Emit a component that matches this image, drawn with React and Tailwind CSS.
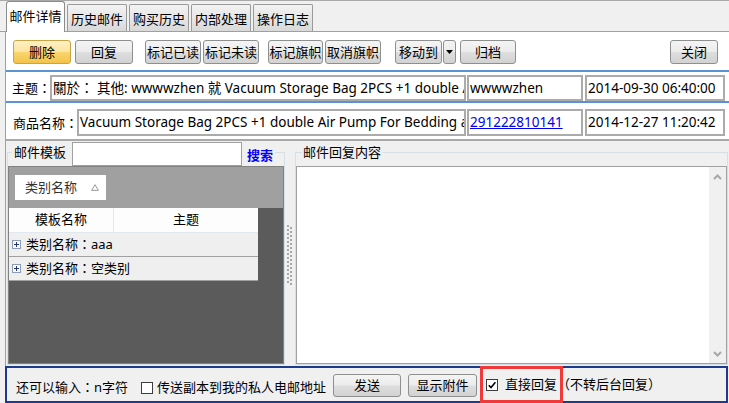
import React from "react";

const BTN =
  "flex items-center justify-center rounded-[3px] border border-[#8e8f8f] bg-[linear-gradient(#f4f4f4_0%,#ececec_48%,#dedede_52%,#d2d2d2_100%)] text-[13px] leading-none text-black whitespace-nowrap";
const BTN_Y =
  "flex items-center justify-center rounded-[3px] border border-[#c9a447] bg-[linear-gradient(#fdf0c4_0%,#fbe5a0_48%,#f8d571_52%,#f3c346_100%)] text-[13px] leading-none text-black whitespace-nowrap";

function C() {
  return <span className="font-['Noto_Sans_CJK_TC',sans-serif]">：</span>;
}

function ActiveTab({ label }) {
  return (
    <div className="w-[59px] h-[31px] -mb-px flex items-center justify-center border border-b-0 border-[#8c8c8c] rounded-t-[3px] bg-white">
      {label}
    </div>
  );
}

function Tab({ label }) {
  return (
    <div className="w-[60px] h-[27px] ml-[2px] flex items-center justify-center pt-[3px] border border-b-0 border-[#9a9a9a] rounded-t-[2px] bg-[linear-gradient(#f3f3f3,#d9d9d9)]">
      {label}
    </div>
  );
}

function Field({ cls, children }) {
  return (
    <div
      className={`${cls} border-2 border-[#ababab] bg-white flex items-center pl-[1px] overflow-hidden whitespace-nowrap text-[13.5px]`}
    >
      {children}
    </div>
  );
}

function PlusBox() {
  return (
    <svg width="9" height="9" viewBox="0 0 9 9" className="shrink-0">
      <rect x="0.5" y="0.5" width="8" height="8" fill="#f8f9fb" stroke="#8d9db3" />
      <path d="M2 4.5H7M4.5 2V7" stroke="#24366a" strokeWidth="1" />
    </svg>
  );
}

function Check({ checked, cls }) {
  return (
    <svg width="12" height="12" viewBox="0 0 12 12" className={`shrink-0 ${cls || ""}`}>
      <rect x="0.5" y="0.5" width="11" height="11" fill="#ffffff" stroke="#3c3c3c" />
      {checked && (
        <path d="M2.8 6.2L5 8.5L9.4 3.2" fill="none" stroke="#000" strokeWidth="1.6" />
      )}
    </svg>
  );
}

function Dots() {
  const items = [];
  for (let i = 0; i < 15; i++) {
    items.push(<rect key={`a${i}`} x="0" y={i * 4} width="2" height="2" fill="#a8a8a8" />);
    items.push(<rect key={`b${i}`} x="3" y={i * 4 + 2} width="2" height="2" fill="#a8a8a8" />);
  }
  return (
    <svg width="6" height="60" viewBox="0 0 6 60">
      {items}
    </svg>
  );
}

export default function App() {
  return (
    <div className="w-[729px] h-[403px] overflow-hidden relative flex flex-col border-t border-[#a9a9a9] bg-[#f0f0f0] text-[13px] text-black font-['Noto_Sans','Noto_Sans_CJK_SC',sans-serif]">
      {/* Tabs */}
      <div className="h-[31px] shrink-0 flex items-end pl-[6px] border-b border-[#a0a0a0]">
        <ActiveTab label="邮件详情" />
        <Tab label="历史邮件" />
        <Tab label="购买历史" />
        <Tab label="内部处理" />
        <Tab label="操作日志" />
      </div>

      {/* Panel */}
      <div className="ml-[5px] border-l border-[#a0a0a0] flex flex-col shrink-0">
        {/* Toolbar */}
        <div className="h-[38px] bg-white flex items-start pt-[8px] pl-[7px] pr-[11px]">
          <div className={`${BTN_Y} w-[58px] h-[24px]`}>删除</div>
          <div className={`${BTN} ml-[4px] w-[58px] h-[24px]`}>回复</div>
          <div className={`${BTN} ml-[12px] w-[56px] h-[24px]`}>标记已读</div>
          <div className={`${BTN} ml-[2px] w-[56px] h-[24px]`}>标记未读</div>
          <div className={`${BTN} ml-[9px] w-[55px] h-[24px]`}>标记旗帜</div>
          <div className={`${BTN} ml-[2px] w-[56px] h-[24px]`}>取消旗帜</div>
          <div className={`${BTN} ml-[14px] w-[47px] h-[24px]`}>移动到</div>
          <div className={`${BTN} ml-[1px] w-[13px] h-[24px]`}>
            <svg width="7" height="4" viewBox="0 0 7 4">
              <path d="M0 0H7L3.5 4Z" fill="#000" />
            </svg>
          </div>
          <div className={`${BTN} ml-[4px] w-[56px] h-[24px]`}>归档</div>
          <div className={`${BTN} ml-auto w-[48px] h-[24px]`}>关闭</div>
        </div>

        {/* Subject row */}
        <div className="h-[33px] border-y-2 border-[#5b94d6] bg-white flex items-start pt-[3px] pl-[6px]">
          <span className="w-[38px] leading-[26px] whitespace-nowrap">
            主题<C />
          </span>
          <Field cls="w-[416px] h-[26px]">
            <span>
              關於<C /> 其他: wwwwzhen 就 Vacuum Storage Bag 2PCS +1 double Air Pump For Bedding and Clothes
            </span>
          </Field>
          <Field cls="ml-[1px] w-[116px] h-[26px]">wwwwzhen</Field>
          <Field cls="ml-[2px] w-[140px] h-[26px]">2014-09-30 06:40:00</Field>
        </div>

        {/* Product row */}
        <div className="h-[38px] border-b-2 border-[#a9a9a9] bg-white flex items-start pt-[6px] pl-[7px]">
          <span className="w-[64px] leading-[27px] whitespace-nowrap">
            商品名称<C />
          </span>
          <Field cls="w-[389px] h-[27px]">
            Vacuum Storage Bag 2PCS +1 double Air Pump For Bedding and Clothes
          </Field>
          <Field cls="ml-[1px] w-[116px] h-[27px]">
            <span className="text-[#0000ee] underline">291222810141</span>
          </Field>
          <Field cls="ml-[2px] w-[140px] h-[27px]">2014-12-27 11:20:42</Field>
        </div>

        {/* Lower area */}
        <div className="h-[225px] flex bg-[#f0f0f0] pl-[1px] pt-[1px]">
          {/* Left group */}
          <fieldset className="w-[278px] h-[223px] min-w-0 m-0 p-0 border border-[#d5dfe5]">
            <legend className="ml-[4px] px-[2px]">
              <div className="h-[20px] flex items-start">
                <span className="leading-[20px] whitespace-nowrap">邮件模板</span>
                <div className="ml-[6px] w-[170px] h-[24px] bg-white border border-[#a0a0a0]" />
                <span className="ml-[5px] mt-[3px] leading-[20px] text-[#0000ff] font-bold whitespace-nowrap">
                  搜索
                </span>
              </div>
            </legend>
            <div className="mt-[4px] h-[198px] border border-[#828282] bg-[#5b5b5b] flex flex-col">
              <div className="h-[41px] shrink-0 bg-[#a0a0a0] pl-[6px] pt-[8px]">
                <div className="w-[91px] h-[25px] bg-white flex items-center pl-[10px] pr-[7px]">
                  <span className="text-[#333] whitespace-nowrap">类别名称</span>
                  <svg width="8" height="7" viewBox="0 0 8 7" className="ml-auto">
                    <path d="M4 0.7L7.4 6.4H0.6Z" fill="none" stroke="#9a9a9a" />
                  </svg>
                </div>
              </div>
              <div className="w-[249px] h-[25px] shrink-0 flex bg-[#fdfdfd] border-b border-[#e2e8f0]">
                <div className="w-[105px] flex items-center justify-center border-r border-[#e6e6e6]">
                  模板名称
                </div>
                <div className="flex-1 flex items-center justify-center">主题</div>
              </div>
              <div className="w-[249px] h-[24px] shrink-0 flex items-center pl-[3px] bg-[#efefef] border-b border-[#a0a0a0]">
                <PlusBox />
                <span className="ml-[5px] whitespace-nowrap">
                  类别名称<C />aaa
                </span>
              </div>
              <div className="w-[249px] h-[24px] shrink-0 flex items-center pl-[3px] bg-[#efefef] border-b border-[#a0a0a0]">
                <PlusBox />
                <span className="ml-[5px] whitespace-nowrap">
                  类别名称<C />空类别
                </span>
              </div>
            </div>
          </fieldset>

          {/* Splitter */}
          <div className="w-[10px] shrink-0 pl-[2px] pt-[83px]">
            <Dots />
          </div>

          {/* Right group */}
          <fieldset className="w-[433px] h-[223px] min-w-0 m-0 p-0 border border-[#d5dfe5]">
            <legend className="ml-[6px] px-[1px]">
              <div className="h-[20px] leading-[20px] whitespace-nowrap">邮件回复内容</div>
            </legend>
            <div className="mt-[4px] h-[198px] border border-[#a0a0a0] bg-white flex justify-end">
              <div className="w-[17px] h-full bg-[#f0f0f0] flex flex-col items-center justify-between pt-[7px] pb-[6px]">
                <svg width="9" height="6" viewBox="0 0 9 6">
                  <path d="M1 5L4.5 1.5L8 5" fill="none" stroke="#a8a8a8" strokeWidth="2" />
                </svg>
                <svg width="9" height="6" viewBox="0 0 9 6">
                  <path d="M1 1L4.5 4.5L8 1" fill="none" stroke="#a8a8a8" strokeWidth="2" />
                </svg>
              </div>
            </div>
          </fieldset>
        </div>
      </div>

      {/* Bottom bar */}
      <div className="ml-[5px] w-[723px] h-[37px] shrink-0 border-2 border-[#1b3b8c] flex items-center pl-[9px]">
        <span className="mt-[6px] whitespace-nowrap">
          还可以输入<C />n字符
        </span>
        <Check cls="ml-[13px] mt-[6px]" />
        <span className="ml-[4px] mt-[6px] whitespace-nowrap">传送副本到我的私人电邮地址</span>
        <div className={`${BTN} ml-[7px] w-[68px] h-[23px] mt-[2px]`}>发送</div>
        <div className={`${BTN} ml-[7px] w-[69px] h-[23px] mt-[2px]`}>显示附件</div>
        <Check checked cls="ml-[9px]" />
        <span className="ml-[7px] whitespace-nowrap">直接回复</span>
        <span className="whitespace-nowrap">（不转后台回复）</span>
      </div>

      {/* Red annotation box */}
      <div className="absolute left-[480px] top-[365px] w-[83px] h-[37px] border-[3px] border-[#f03a3a]" />
    </div>
  );
}
